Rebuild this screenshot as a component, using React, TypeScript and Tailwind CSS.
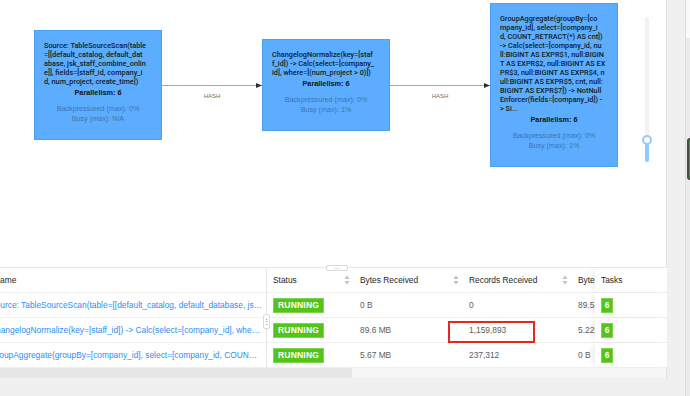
import React from "react";

const graphNodes = [
  {
    id: "source",
    lines: [
      "Source: TableSourceScan(table",
      "=[[default_catalog, default_dat",
      "abase, jsk_staff_combine_onlin",
      "e]], fields=[staff_id, company_i",
      "d, num_project, create_time])",
    ],
    busy: "N/A",
  },
  {
    id: "normalize",
    lines: [
      "ChangelogNormalize(key=[staf",
      "f_id]) -> Calc(select=[company_",
      "id], where=[(num_project > 0)])",
    ],
    busy: "1%",
  },
  {
    id: "aggregate",
    lines: [
      "GroupAggregate(groupBy=[co",
      "mpany_id], select=[company_i",
      "d, COUNT_RETRACT(*) AS cnt])",
      "-> Calc(select=[company_id, nu",
      "ll:BIGINT AS EXPR$1, null:BIGIN",
      "T AS EXPR$2, null:BIGINT AS EX",
      "PR$3, null:BIGINT AS EXPR$4, n",
      "ull:BIGINT AS EXPR$5, cnt, null:",
      "BIGINT AS EXPR$7]) -> NotNull",
      "Enforcer(fields=[company_id]) -",
      "> Si...",
    ],
    busy: "1%",
  },
];

const rows = [
  {
    name: "Source: TableSourceScan(table=[[default_catalog, default_database, jsk_staff_combine_online]], fields=[staff_id, company_id, num_project, create_time])",
    bytesIn: "0 B",
    recordsIn: "0",
    bytesOut: "89.5 MB",
  },
  {
    name: "ChangelogNormalize(key=[staff_id]) -> Calc(select=[company_id], where=[(num_project > 0)])",
    bytesIn: "89.6 MB",
    recordsIn: "1,159,893",
    bytesOut: "5.22 MB",
  },
  {
    name: "GroupAggregate(groupBy=[company_id], select=[company_id, COUNT_RETRACT(*) AS cnt]) -> Calc(select=[company_id])",
    bytesIn: "5.67 MB",
    recordsIn: "237,312",
    bytesOut: "0 B",
  },
];

function GraphNode({ lines, busy }: { lines: string[]; busy: string }) {
  return (
    <div className="w-[128px] shrink-0 border border-[#4d9ff2] bg-[#5cadff] px-[9px] pt-[10px] pb-[15px]">
      <div className="whitespace-nowrap font-['Roboto',sans-serif] text-[7.3px] font-medium leading-[9px] text-[#111c26]">
        {lines.map((line) => (
          <div key={line}>{line}</div>
        ))}
      </div>
      <div className="mt-[2px] text-center text-[7.3px] font-bold leading-[10px] text-[#111]">
        Parallelism: 6
      </div>
      <div className="mt-[6px] text-center text-[7.2px] leading-[10px] text-[#3f74ad]">
        <div>Backpressured (max): 0%</div>
        <div>Busy (max): {busy}</div>
      </div>
    </div>
  );
}

function Edge() {
  return (
    <div className="relative h-px w-[100px] shrink-0 bg-[#a9a9a9]">
      <svg className="absolute -top-[2px] right-0" width="6" height="5" viewBox="0 0 6 5">
        <path d="M0 0L6 2.5L0 5z" fill="#2f2f2f" />
      </svg>
      <span className="absolute left-1/2 top-[8px] -translate-x-1/2 text-[6px] leading-[6px] text-[#707070]">
        HASH
      </span>
    </div>
  );
}

function SortIcon() {
  return (
    <svg width="6" height="10" viewBox="0 0 6 10">
      <path d="M3 0.5L5.5 4H0.5z" fill="#c4c4c4" />
      <path d="M3 9.5L5.5 6H0.5z" fill="#c4c4c4" />
    </svg>
  );
}

function Running() {
  return (
    <span className="inline-flex h-[15px] items-center border border-[#80d34c] bg-[#52c41a] px-[4px] text-[8.5px] font-bold tracking-[0.2px] text-white">
      RUNNING
    </span>
  );
}

export default function App() {
  return (
    <div className="relative flex h-[396px] w-[690px] overflow-hidden bg-[#f0f0f0] font-['Liberation_Sans',sans-serif]">
      <div className="flex h-[378px] w-[667px] shrink-0 flex-col border-r border-[#e4e4e4] bg-white">
        {/* Job graph */}
        <div className="relative h-[267px] shrink-0">
          <div className="flex h-[170px] items-center pl-[34px]">
            <GraphNode lines={graphNodes[0].lines} busy={graphNodes[0].busy} />
            <Edge />
            <GraphNode lines={graphNodes[1].lines} busy={graphNodes[1].busy} />
            <Edge />
            <GraphNode lines={graphNodes[2].lines} busy={graphNodes[2].busy} />
          </div>

          {/* Zoom slider */}
          <div className="absolute left-[645px] top-[17px] flex h-[145px] w-[4px] flex-col justify-end rounded-full bg-[#f2f2f2]">
            <div className="h-[22px] w-full rounded-full bg-[#91caff]" />
            <div className="absolute left-1/2 top-[118px] h-[10px] w-[10px] -translate-x-1/2 rounded-full border-2 border-[#91caff] bg-white" />
          </div>
        </div>

        {/* Vertex table */}
        <div className="relative flex-1 border-t border-[#e8e8e8] text-[8.4px]">
          <div className="absolute -top-[3px] left-[326px] z-10 flex h-[6px] w-[22px] items-center justify-center rounded-[2px] border border-[#d9d9d9] bg-white text-[6px] leading-none text-[#555]">
            ···
          </div>

          <div className="flex h-[25px] border-b border-[#f0f0f0] font-medium text-[#262626]">
            <div className="flex w-[267px] shrink-0 items-center overflow-hidden border-r border-[#e8e8e8]">
              <span className="-ml-[6px]">Name</span>
            </div>
            <div className="flex w-[86px] shrink-0 items-center justify-between pl-[6px] pr-[3px]">
              <span>Status</span>
              <SortIcon />
            </div>
            <div className="flex w-[109px] shrink-0 items-center justify-between pl-[7px] pr-[3px]">
              <span>Bytes Received</span>
              <SortIcon />
            </div>
            <div className="flex w-[109px] shrink-0 items-center justify-between pl-[7px] pr-[3px]">
              <span>Records Received</span>
              <SortIcon />
            </div>
            <div className="flex w-[24px] shrink-0 items-center overflow-hidden whitespace-nowrap pl-[7px]">
              Bytes Sent
            </div>
            <div className="flex w-[72px] shrink-0 items-center bg-white pl-[6px] shadow-[-5px_0_6px_-3px_rgba(0,0,0,0.1)]">
              Tasks
            </div>
          </div>

          {rows.map((row) => (
            <div key={row.name} className="flex h-[25px] border-b border-[#f0f0f0] text-[#5c5c5c]">
              <div className="flex w-[267px] shrink-0 items-center overflow-hidden border-r border-[#e8e8e8]">
                <span className="-ml-[10px] block truncate pr-[4px] text-[#2b8ef7]">{row.name}</span>
              </div>
              <div className="flex w-[86px] shrink-0 items-center pl-[6px]">
                <Running />
              </div>
              <div className="flex w-[109px] shrink-0 items-center pl-[7px]">{row.bytesIn}</div>
              <div className="flex w-[109px] shrink-0 items-center pl-[7px]">{row.recordsIn}</div>
              <div className="flex w-[24px] shrink-0 items-center overflow-hidden whitespace-nowrap pl-[7px]">
                {row.bytesOut}
              </div>
              <div className="flex w-[72px] shrink-0 items-center bg-white pl-[6px] shadow-[-5px_0_6px_-3px_rgba(0,0,0,0.1)]">
                <span className="flex h-[15px] w-[12px] items-center justify-center border border-[#80d34c] bg-[#52c41a] text-[8.5px] font-bold text-white">
                  6
                </span>
              </div>
            </div>
          ))}

          {/* column resize handle */}
          <div className="absolute left-[263px] top-[46px] flex h-[15px] w-[7px] items-center justify-center rounded-[2px] border border-[#d9d9d9] bg-white text-[7px] leading-none text-[#666]">
            ⋮
          </div>

          {/* highlight annotation */}
          <div className="pointer-events-none absolute left-[448px] top-[53px] h-[22px] w-[87px] border-2 border-[#e8261f]" />

          {/* horizontal scrollbar */}
          <div className="flex h-[10px]">
            <div className="w-[352px] bg-[#e6e6e6]" />
            <div className="flex-1 bg-[#f6f6f6]" />
          </div>
        </div>
      </div>

      <div className="ml-[18px] flex w-[5px] shrink-0 flex-col border-l border-[#dcdcdc]">
        <div className="h-[38px] bg-[#fafafa]" />
        <div className="relative flex-1 bg-[#ebebeb]">
          <div className="absolute left-[1px] top-[100px] h-[42px] w-[8px] rounded-l-[3px] border-2 border-[#4a4a4a] bg-[#3f9b5c]" />
        </div>
      </div>
    </div>
  );
}
